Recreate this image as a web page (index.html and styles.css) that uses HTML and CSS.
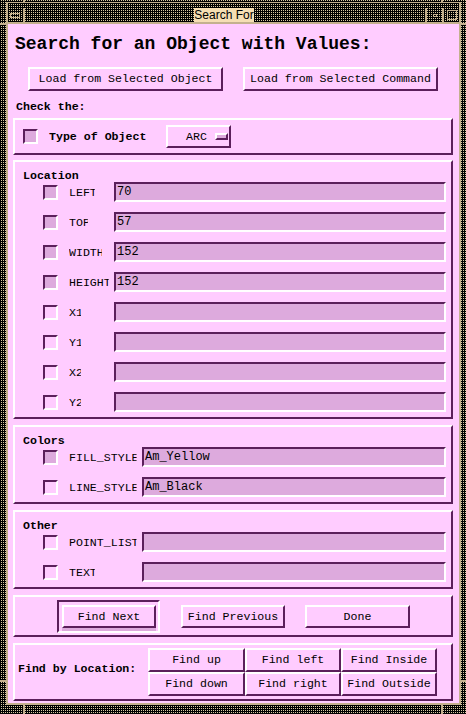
FILE: index.html
```html
<!DOCTYPE html>
<html lang="en">
    <head>
        <meta charset="UTF-8">
        <meta name="viewport" content="width=device-width, initial-scale=1.0">
        <title>Search For</title>
        <link rel="stylesheet" href="styles.css">
    </head>
    <body>
        <div class="frame">
            <span class="notch top-l"></span>
            <span class="notch top-r"></span>
            <span class="notch bot-l"></span>
            <span class="notch bot-r"></span>
            <span class="notch side-lt"></span>
            <span class="notch side-rt"></span>
            <span class="notch side-lb"></span>
            <span class="notch side-rb"></span>
            <div class="edge">
                <div class="titlebar">
                    <div class="tb-menu"><span class="menu-icon"></span></div>
                    <div class="tb-title"><span>Search For</span></div>
                    <div class="tb-min"><span class="min-icon"></span></div>
                    <div class="tb-max"><span class="max-icon"></span></div>
                </div>
                <main class="dialog">
                    <h1 class="heading">Search for an Object with Values:</h1>
                    <div class="load-row">
                        <button class="btn load">Load from Selected Object</button>
                        <button class="btn load">Load from Selected Command</button>
                    </div>
                    <div class="check-title">Check the:</div>

                    <section class="group type-group">
                        <span class="check on"></span>
                        <span class="type-lbl">Type of Object</span>
                        <button class="option">ARC<span class="opt-ind"></span></button>
                    </section>

                    <section class="group">
                        <div class="group-title">Location</div>
                        <div class="row"><span class="check on"></span><span class="lbl"><span class="cut">LEFT</span></span><div class="field">70</div></div>
                        <div class="row"><span class="check on"></span><span class="lbl"><span class="cut">TOP</span></span><div class="field">57</div></div>
                        <div class="row"><span class="check on"></span><span class="lbl"><span class="cut">WIDTH</span></span><div class="field">152</div></div>
                        <div class="row"><span class="check on"></span><span class="lbl"><span class="cut">HEIGHT</span></span><div class="field">152</div></div>
                        <div class="row"><span class="check"></span><span class="lbl"><span class="cut">X1</span></span><div class="field"></div></div>
                        <div class="row"><span class="check"></span><span class="lbl"><span class="cut">Y1</span></span><div class="field"></div></div>
                        <div class="row"><span class="check"></span><span class="lbl"><span class="cut">X2</span></span><div class="field"></div></div>
                        <div class="row"><span class="check"></span><span class="lbl"><span class="cut">Y2</span></span><div class="field"></div></div>
                    </section>

                    <section class="group">
                        <div class="group-title">Colors</div>
                        <div class="row"><span class="check on"></span><span class="lbl wide"><span class="cut">FILL_STYLE</span></span><div class="field">Am_Yellow</div></div>
                        <div class="row"><span class="check"></span><span class="lbl wide"><span class="cut">LINE_STYLE</span></span><div class="field">Am_Black</div></div>
                    </section>

                    <section class="group">
                        <div class="group-title">Other</div>
                        <div class="row"><span class="check"></span><span class="lbl wide"><span class="cut">POINT_LIST</span></span><div class="field"></div></div>
                        <div class="row"><span class="check"></span><span class="lbl wide"><span class="cut">TEXT</span></span><div class="field"></div></div>
                    </section>

                    <section class="group find-row">
                        <div class="default-ring"><button class="btn next">Find Next</button></div>
                        <button class="btn prev">Find Previous</button>
                        <button class="btn done">Done</button>
                    </section>

                    <section class="group find-by">
                        <span class="find-lbl">Find by Location:</span>
                        <div class="find-grid">
                            <button class="btn">Find up</button>
                            <button class="btn">Find left</button>
                            <button class="btn">Find Inside</button>
                            <button class="btn">Find down</button>
                            <button class="btn">Find right</button>
                            <button class="btn">Find Outside</button>
                        </div>
                    </section>
                </main>
            </div>
        </div>
    </body>
</html>
```

FILE: styles.css
```css
:root{
    --pink:#ffccff;
    --field:#ddaadd;
    --dark:#5b1f5b;
    --light:#ffffff;
    --tan:#c4b08e;
    --dot:#d9c9a2;
    --wheat:#f5deb3;
}
*,*::before,*::after{
    padding: 0;
    margin: 0;
    box-sizing: border-box;
}
body{
    width: 466px;
    height: 714px;
    overflow: hidden;
    font-family: "Liberation Mono", "Courier New", monospace;
    font-size: 11.6px;
    color: #000;
}

/* window manager frame */
.frame{
    position: relative;
    width: 466px;
    height: 714px;
    padding: 2px 5px 9px 6px;
    background-color: #000;
    background-image: conic-gradient(var(--dot) 0 25%, #000 0);
    background-size: 2px 2px;
}
.notch{
    position: absolute;
    background: var(--tan);
}
.top-l{ left: 23px; top: 0; width: 2px; height: 3px; }
.top-r{ left: 441px; top: 0; width: 2px; height: 3px; }
.bot-l{ left: 23px; bottom: 0; width: 2px; height: 10px; }
.bot-r{ left: 441px; bottom: 0; width: 2px; height: 10px; }
.side-lt{ left: 0; top: 23px; width: 7px; height: 2px; }
.side-rt{ right: 0; top: 23px; width: 6px; height: 2px; }
.side-lb{ left: 0; top: 680px; width: 7px; height: 2px; }
.side-rb{ right: 0; top: 680px; width: 6px; height: 2px; }
.edge{
    height: 100%;
    display: flex;
    flex-direction: column;
    border: 2px solid var(--tan);
    border-top-width: 1px;
}
.titlebar{
    display: flex;
    height: 21px;
    padding-top: 5px;
    border-bottom: 2px solid var(--tan);
}
.tb-menu{
    width: 17px;
    border-right: 2px solid var(--tan);
    display: flex;
    align-items: center;
    justify-content: center;
}
.menu-icon{
    width: 10px;
    height: 5px;
    border: 1px solid var(--tan);
    margin-left: -2px;
}
.tb-title{
    flex: 1;
    display: flex;
    justify-content: center;
}
.tb-title span{
    background: var(--wheat);
    width: 60px;
    height: 14px;
    font-family: "Liberation Sans", Arial, sans-serif;
    font-size: 12px;
    line-height: 14px;
    text-align: center;
    margin-left: -2px;
}
.tb-min, .tb-max{
    width: 17px;
    border-left: 2px solid var(--tan);
    display: flex;
    align-items: center;
    justify-content: center;
}
.min-icon{
    width: 4px;
    height: 3px;
    border: 1px solid var(--tan);
}
.max-icon{
    width: 10px;
    height: 10px;
    border: 1px solid var(--tan);
}

/* dialog */
.dialog{
    flex: 1;
    background: var(--pink);
    display: flex;
    flex-direction: column;
}
.heading{
    margin: 9px 0 0 7px;
    font-size: 18px;
    line-height: 22px;
    font-weight: bold;
}
.btn{
    font-family: inherit;
    font-size: 11.6px;
    color: #000;
    background: var(--pink);
    border: 2px solid;
    border-color: var(--light) var(--dark) var(--dark) var(--light);
    height: 24px;
    text-align: center;
    line-height: 18px;
}
.load-row{
    margin-top: 12px;
    padding-left: 20px;
    display: flex;
    gap: 20px;
}
.load{
    width: 195px;
}
.check-title{
    margin: 7px 0 0 8px;
    font-weight: bold;
    line-height: 18px;
}
.group{
    margin: 5px 6px 0 5px;
    border: 2px solid;
    border-color: var(--light) var(--dark) var(--dark) var(--light);
    padding: 0 5px 5px 8px;
}
.group + .group{
    margin-top: 6px;
}
.type-group{
    margin-top: 2px;
    display: flex;
    align-items: center;
    padding: 5px 0 5px 8px;
}
.type-group + .group{
    margin-top: 5px;
}
.type-lbl{
    font-weight: bold;
    margin-left: 11px;
    width: 117px;
}
.option{
    font-family: inherit;
    font-size: 11.6px;
    color: #000;
    width: 65px;
    height: 23px;
    background: var(--pink);
    border: 2px solid;
    border-color: var(--light) var(--dark) var(--dark) var(--light);
    display: flex;
    align-items: center;
    padding-left: 18px;
}
.opt-ind{
    width: 13px;
    height: 7px;
    margin-left: 8px;
    background: var(--field);
    border: 2px solid;
    border-color: var(--light) var(--dark) var(--dark) var(--light);
}
.group-title{
    height: 20px;
    padding-top: 7px;
    line-height: 13px;
    font-weight: bold;
}
.row{
    display: flex;
    align-items: center;
    height: 20px;
}
.row + .row{
    margin-top: 10px;
}
.check{
    width: 15px;
    height: 15px;
    flex: none;
    background: var(--pink);
    border: 2px solid;
    border-color: var(--dark) var(--light) var(--light) var(--dark);
}
.row .check{
    margin-left: 20px;
}
.check.on{
    background: var(--field);
}
.lbl{
    width: 45px;
    margin-left: 11px;
    flex: none;
    white-space: nowrap;
}
.lbl.wide{
    width: 73px;
}
.cut{
    display: inline-block;
    clip-path: inset(0 2px 0 0);
}
.field{
    flex: 1;
    height: 20px;
    background: var(--field);
    border: 2px solid;
    border-color: var(--dark) var(--light) var(--light) var(--dark);
    padding-left: 1px;
    font-size: 12px;
    line-height: 16px;
}

/* bottom buttons */
.find-row{
    display: flex;
    align-items: center;
    padding: 3px 0 2px 42px;
}
.default-ring{
    width: 103px;
    height: 33px;
    border: 2px solid;
    border-color: var(--dark) var(--light) var(--light) var(--dark);
    padding: 3px 2px 3px 3px;
}
.next{
    width: 94px;
    height: 23px;
    box-shadow: 0 3px 0 var(--field);
}
.prev{
    width: 104px;
    height: 23px;
    margin-left: 21px;
}
.done{
    width: 105px;
    height: 23px;
    margin-left: 20px;
}
.find-by{
    display: flex;
    align-items: center;
    padding: 3px 0 3px 3px;
}
.find-lbl{
    width: 130px;
    margin-bottom: 7px;
    font-weight: bold;
}
.find-grid{
    display: grid;
    grid-template-columns: 97px 96px 96px;
    grid-template-rows: 24px 24px;
}
```
